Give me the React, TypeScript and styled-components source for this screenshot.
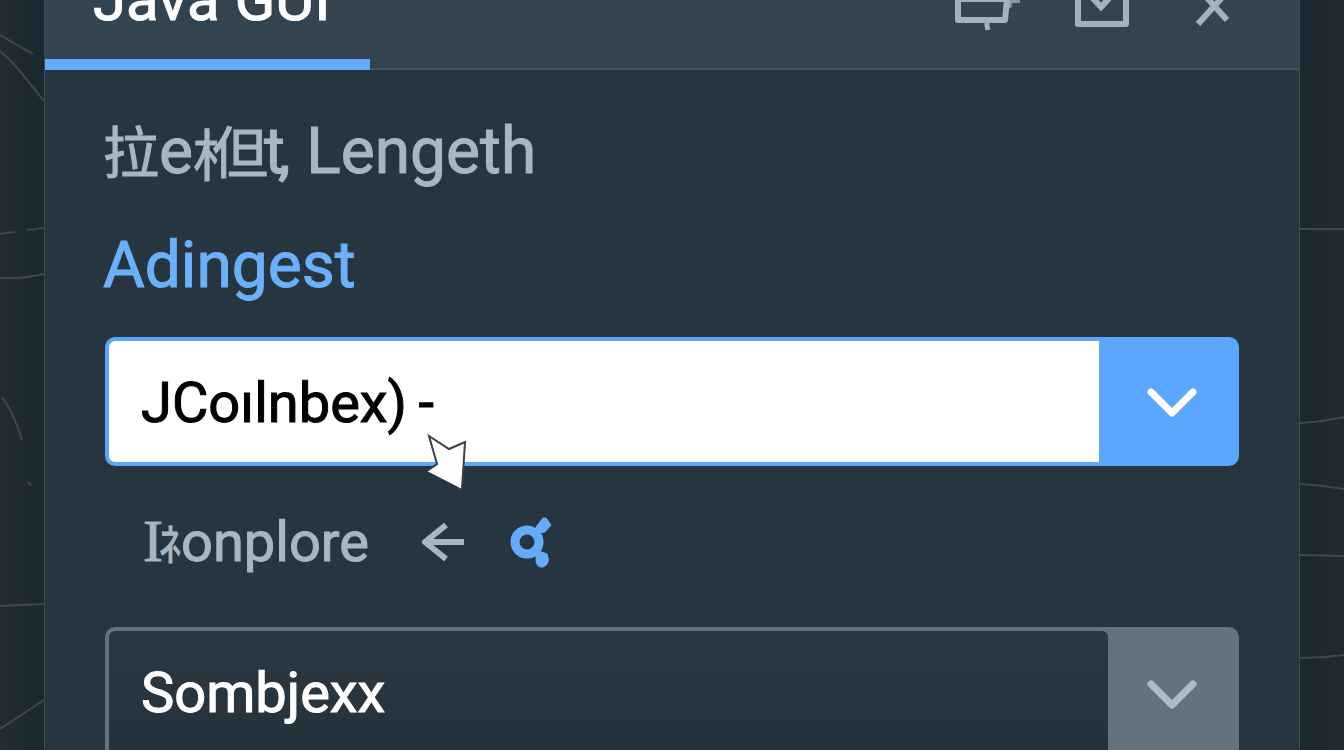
import React, { useState } from "react";
import styled, { createGlobalStyle } from "styled-components";

const GlobalStyle = createGlobalStyle`
  *, *::before, *::after { box-sizing: border-box; }
  body {
    margin: 0;
    background: #202b34;
    font-family: Roboto, "Noto Sans CJK SC", sans-serif;
  }
  button, input { font: inherit; color: inherit; border: 0; background: none; padding: 0; margin: 0; }
  button { cursor: pointer; }
  svg { display: block; overflow: visible; }
`;

const Page = styled.main`
  position: relative;
  height: 100vh;
  overflow: hidden;
  padding: 0 44px;
  background: linear-gradient(90deg, #212c35 0, #1c2830 44px, #1c2830 calc(100% - 44px), #202a33 100%);
`;

const Backdrop = styled.svg<{ $side: "left" | "right" }>`
  position: absolute;
  top: 0;
  ${(p) => p.$side}: 0;
  width: 44px;
  height: 750px;
  fill: none;
  stroke: #3d4850;
  stroke-width: 2;
`;

const Window = styled.section`
  position: relative;
  margin-top: -30px;
  border: 1px solid #3d4a54;
  border-top: 0;
  background: #263540;
`;

const TitleBar = styled.header`
  position: relative;
  display: flex;
  justify-content: space-between;
  align-items: flex-start;
  height: 100px;
  padding: 0 53px 0 48px;
  background: #33434f;
  border-bottom: 2px solid #46545e;
`;

const Title = styled.h1`
  margin: 0;
  font-size: 60px;
  line-height: 60px;
  font-weight: 400;
  -webkit-text-stroke: 1px currentColor;
  color: #fff;
`;

const ActiveBar = styled.span`
  position: absolute;
  left: 0;
  bottom: -2px;
  width: 325px;
  height: 11px;
  background: #64abfc;
`;

const WindowActions = styled.div`
  display: flex;
  gap: 48px;
  color: #a3b1bd;
`;

const IconButton = styled.button<{ $size: number }>`
  width: ${(p) => p.$size}px;
  height: ${(p) => p.$size}px;
  svg { width: 100%; height: 100%; }
`;

const Body = styled.div`
  display: flex;
  flex-direction: column;
  padding: 42px 60px 48px;
`;

const Heading = styled.h2<{ $accent?: boolean }>`
  margin: 0 0 ${(p) => (p.$accent ? 31 : 34)}px -2px;
  font-size: 64px;
  line-height: 80px;
  font-weight: 400;
  -webkit-text-stroke: 1px currentColor;
  white-space: pre;
  color: ${(p) => (p.$accent ? "#6bb0fb" : "#a9b6c2")};
`;

const Han = styled.span`
  font-family: "Noto Sans CJK SC", sans-serif;
  font-size: 56px;
  line-height: 64px;
  font-weight: 400;
`;

const HanRadical = styled(Han)`
  display: inline-block;
  width: 24px;
  overflow: hidden;
  vertical-align: bottom;
  line-height: 80px;
`;

const Tucked = styled.span<{ $by: number }>`
  margin-left: -${(p) => p.$by}px;
`;

const Combo = styled.div<{ $active?: boolean }>`
  position: relative;
  display: flex;
  height: ${(p) => (p.$active ? 129 : 134)}px;
  padding: 4px 0 4px 4px;
  border-radius: 10px;
  background: ${(p) => (p.$active ? "#5ba7ff" : "#65727e")};
`;

const ComboInput = styled.input<{ $active?: boolean }>`
  flex: 1;
  min-width: 0;
  padding: ${(p) => (p.$active ? "2px 32px 0" : "0 32px 2px")};
  outline: 0;
  font-size: 56px;
  font-weight: 400;
  -webkit-text-stroke: 1px currentColor;
  border-radius: ${(p) => (p.$active ? "6px 0 0 6px" : "6px")};
  color: ${(p) => (p.$active ? "#000" : "#fff")};
  background: ${(p) => (p.$active ? "#fff" : "linear-gradient(#2b3842, #24323b)")};
`;

const ComboToggle = styled.button<{ $active?: boolean }>`
  display: flex;
  align-items: center;
  justify-content: flex-end;
  width: ${(p) => (p.$active ? 140 : 131)}px;
  padding: 2px 41px 0 0;
  color: ${(p) => (p.$active ? "#fff" : "#aebbc8")};
`;

const Pointer = styled.svg`
  position: absolute;
  left: 320px;
  top: 97px;
  width: 42px;
  height: 56px;
  pointer-events: none;
`;

const ExploreRow = styled.div`
  display: flex;
  align-items: center;
  height: 80px;
  margin: 36px 0 45px;
  padding-left: 38px;
  color: #a9b6c2;
`;

const ExploreLabel = styled.span`
  width: 275px;
  font-size: 56px;
  line-height: 80px;
  -webkit-text-stroke: 1px currentColor;
  white-space: nowrap;
`;

const SerifInitial = styled.span`
  font-family: "Liberation Serif", serif;
  font-size: 60px;
  line-height: 64px;
`;

const Kana = styled.span`
  font-family: "Noto Sans CJK JP", sans-serif;
  font-size: 44px;
  line-height: 64px;
  margin-left: -4px;
`;

const LinkButton = styled(IconButton)`
  margin-left: 42px;
  color: #64abfc;
`;

function Chevron() {
  return (
    <svg width="52" height="34" viewBox="0 0 52 34" fill="none" stroke="currentColor" strokeWidth="7" strokeLinecap="round" strokeLinejoin="round" aria-hidden="true">
      <path d="M5 6 26 27 47 6" />
    </svg>
  );
}

export default function App() {
  const [first, setFirst] = useState("JCoılnbex)\u2009-");
  const [second, setSecond] = useState("Sombjexx");

  return (
    <>
      <GlobalStyle />
      <Page>
        <Backdrop $side="left" viewBox="0 0 44 750" aria-hidden="true">
          <path d="M0 35 33 54M0 51C16 64 30 84 44 101M0 234 15 232M27 230 44 228M0 278Q24 279 44 274M2 397Q14 413 22 440M28 481l3 5M0 606 44 604M0 729 44 700" />
        </Backdrop>
        <Backdrop $side="right" viewBox="0 0 44 750" aria-hidden="true">
          <path d="M0 229H44M0 423Q20 422 44 417M0 484Q20 485 44 489M0 555 44 556M0 658Q22 658 44 655" />
        </Backdrop>
        <Window>
          <TitleBar>
            <Title>Java GUI</Title>
            <WindowActions>
              <IconButton $size={64} aria-label="Minimize">
                <svg viewBox="0 0 64 64" fill="none" stroke="currentColor" strokeWidth="6" strokeLinejoin="round">
                  <path d="M0 29H49L47 50H0Z" />
                  <path d="M29 50V56l1 4" strokeWidth="5" />
                  <path d="M48 31H62M53 31 51 38" strokeWidth="4" opacity=".75" />
                </svg>
              </IconButton>
              <IconButton $size={64} aria-label="Maximize">
                <svg viewBox="0 0 64 64" fill="none" stroke="currentColor" strokeWidth="6" strokeLinejoin="round">
                  <path d="M8 6H56V54H8Z" />
                  <path d="M17 22 31 37 45 22" strokeLinejoin="miter" />
                </svg>
              </IconButton>
              <IconButton $size={64} aria-label="Close">
                <svg viewBox="0 0 64 64" fill="none" stroke="currentColor" strokeWidth="6">
                  <path d="M16 54 45 22M45 50 18 20" />
                </svg>
              </IconButton>
            </WindowActions>
            <ActiveBar />
          </TitleBar>
          <Body>
            <Heading>
              <Han>拉</Han>e<HanRadical>相</HanRadical>
              <Tucked $by={5}><Han>但</Han></Tucked><Tucked $by={4}>t</Tucked><Tucked $by={7}>,</Tucked> Lengeth
            </Heading>
            <Heading $accent>Adingest</Heading>
            <Combo $active>
              <ComboInput $active aria-label="Adingest" value={first} onChange={(e) => setFirst(e.target.value)} />
              <ComboToggle $active aria-label="Open list">
                <Chevron />
              </ComboToggle>
              <Pointer viewBox="0 0 42 56" aria-hidden="true">
                <path d="M4 2 24 15 40 8 37 55 2 37 12 30Z" fill="#fff" />
                <path d="M2 37 12 30 4 2 24 15 40 8 37 55" fill="none" stroke="#3a3f44" strokeWidth="2" />
              </Pointer>
            </Combo>
            <ExploreRow>
              <ExploreLabel>
                <SerifInitial>I</SerifInitial><Kana>ﾈ</Kana>onplore
              </ExploreLabel>
              <IconButton $size={48} aria-label="Back">
                <svg viewBox="0 0 48 48" fill="none" stroke="currentColor" strokeWidth="6" strokeLinejoin="round">
                  <path d="M28 7 7 24 28 41M7 24H46" />
                </svg>
              </IconButton>
              <LinkButton $size={48} aria-label="Search">
                <svg viewBox="0 0 48 48" fill="none" stroke="currentColor">
                  <circle cx="19" cy="24" r="12" strokeWidth="9" />
                  <path d="M28 9 35 0 38 0 43 7 37 14 31 15Z" fill="currentColor" strokeWidth="1" />
                  <path d="M28 32 39 36Q43 46 35 49 28 50 28 41Z" fill="currentColor" strokeWidth="1" />
                </svg>
              </LinkButton>
            </ExploreRow>
            <Combo>
              <ComboInput aria-label="Sombjexx" value={second} onChange={(e) => setSecond(e.target.value)} />
              <ComboToggle aria-label="Open list">
                <Chevron />
              </ComboToggle>
            </Combo>
          </Body>
        </Window>
      </Page>
    </>
  );
}
